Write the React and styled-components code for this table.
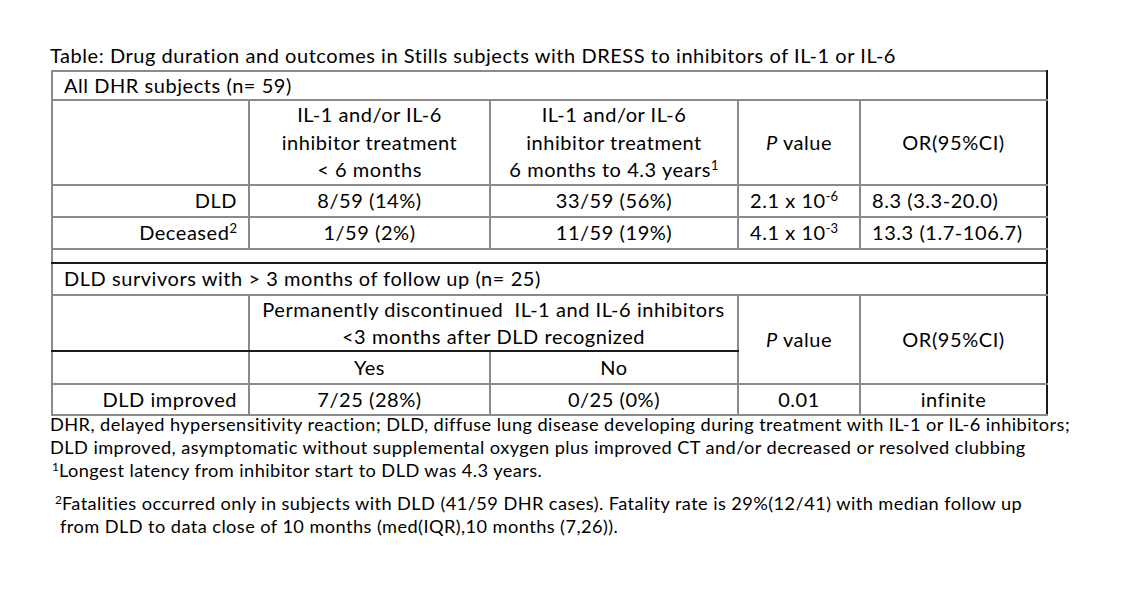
import React from 'react';
import styled, { createGlobalStyle } from 'styled-components';

const GlobalStyle = createGlobalStyle`
  body {
    margin: 0;
    background: #ffffff;
    color: #000000;
    font-family: Lato, "Liberation Sans", sans-serif;
  }
`;

const GRAY = '#8a8a8a';
const DARK = '#1a1a1a';

const Page = styled.div`
  padding: 44px 0 0 50px;
  font-size: 20px;
  letter-spacing: 0.55px;
`;

const Title = styled.div`
  line-height: 23px;
  margin-bottom: 3px;
`;

const Table = styled.table`
  border-collapse: collapse;
  table-layout: fixed;
  width: 995px;
  margin-left: 1px;
`;

const Row = styled.tr`
  height: ${p => p.$h}px;
`;

const Cell = styled.td`
  border: 2px solid ${GRAY};
  border-bottom-color: ${p => (p.$darkBottom ? DARK : GRAY)};
  border-right-color: ${p => (p.$darkRight ? DARK : GRAY)};
  padding: 0 11px;
  text-align: ${p => p.$align || 'center'};
  vertical-align: middle;
  line-height: ${p => p.$lh || 23}px;
  white-space: nowrap;
`;

const Sup = styled.sup`
  font-size: 0.65em;
  line-height: 0;
  vertical-align: 0.55em;
  letter-spacing: 0;
`;

const Ital = styled.i`
  font-style: italic;
`;

const Notes = styled.div`
  margin-top: -3px;
  line-height: 23px;
  font-size: 18.2px;
  letter-spacing: 0.43px;
`;

const Note = styled.div`
  padding-left: ${p => p.$indent || 0}px;
  margin-top: ${p => p.$gap || 0}px;
`;

const cols = [197, 241, 248, 122, 187];

const App = () => (
  <>
    <GlobalStyle />
    <Page>
      <Title>Table: Drug duration and outcomes in Stills subjects with DRESS to inhibitors of IL-1 or IL-6</Title>
      <Table>
        <colgroup>
          {cols.map((w, i) => (
            <col key={i} style={{ width: w }} />
          ))}
        </colgroup>
        <tbody>
          <Row $h={29}>
            <Cell colSpan={5} $align="left" $darkRight>All DHR subjects (n= 59)</Cell>
          </Row>
          <Row $h={84}>
            <Cell />
            <Cell $lh={27.5}>
              IL-1 and/or IL-6
              <br />
              inhibitor treatment
              <br />
              &lt; 6 months
            </Cell>
            <Cell $lh={27.5}>
              IL-1 and/or IL-6
              <br />
              inhibitor treatment
              <br />6 months to 4.3 years<Sup>1</Sup>
            </Cell>
            <Cell>
              <Ital>P</Ital> value
            </Cell>
            <Cell $darkRight>OR(95%CI)</Cell>
          </Row>
          <Row $h={32}>
            <Cell $align="right">DLD</Cell>
            <Cell>8/59 (14%)</Cell>
            <Cell>33/59 (56%)</Cell>
            <Cell $align="left">
              2.1 x 10<Sup>-6</Sup>
            </Cell>
            <Cell $align="left" $darkRight>8.3 (3.3-20.0)</Cell>
          </Row>
          <Row $h={32}>
            <Cell $align="right">
              Deceased<Sup>2</Sup>
            </Cell>
            <Cell>1/59 (2%)</Cell>
            <Cell>11/59 (19%)</Cell>
            <Cell $align="left">
              4.1 x 10<Sup>-3</Sup>
            </Cell>
            <Cell $align="left" $darkRight>13.3 (1.7-106.7)</Cell>
          </Row>
          <Row $h={14}>
            <Cell colSpan={5} $darkBottom $darkRight />
          </Row>
          <Row $h={32}>
            <Cell colSpan={5} $align="left" $darkRight>
              DLD survivors with &gt; 3 months of follow up (n= 25)
            </Cell>
          </Row>
          <Row $h={56}>
            <Cell $darkBottom />
            <Cell colSpan={2} $lh={27} $darkBottom>
              Permanently discontinued{'\u00a0'} IL-1 and IL-6 inhibitors
              <br />
              &lt;3 months after DLD recognized
            </Cell>
            <Cell rowSpan={2}>
              <Ital>P</Ital> value
            </Cell>
            <Cell rowSpan={2} $darkRight>OR(95%CI)</Cell>
          </Row>
          <Row $h={33}>
            <Cell />
            <Cell>Yes</Cell>
            <Cell>No</Cell>
          </Row>
          <Row $h={31}>
            <Cell $align="right">DLD improved</Cell>
            <Cell>7/25 (28%)</Cell>
            <Cell>0/25 (0%)</Cell>
            <Cell>0.01</Cell>
            <Cell $darkRight>infinite</Cell>
          </Row>
        </tbody>
      </Table>
      <Notes>
        <Note>
          DHR, delayed hypersensitivity reaction; DLD, diffuse lung disease developing during treatment with IL-1 or IL-6 inhibitors;
        </Note>
        <Note>DLD improved, asymptomatic without supplemental oxygen plus improved CT and/or decreased or resolved clubbing</Note>
        <Note $indent={2}>
          <Sup>1</Sup>Longest latency from inhibitor start to DLD was 4.3 years.
        </Note>
        <Note $indent={5} $gap={10}>
          <Sup>2</Sup>Fatalities occurred only in subjects with DLD (41/59 DHR cases). Fatality rate is 29%(12/41) with median follow up
        </Note>
        <Note $indent={10}>from DLD to data close of 10 months (med(IQR),10 months (7,26)).</Note>
      </Notes>
    </Page>
  </>
);

export default App;
